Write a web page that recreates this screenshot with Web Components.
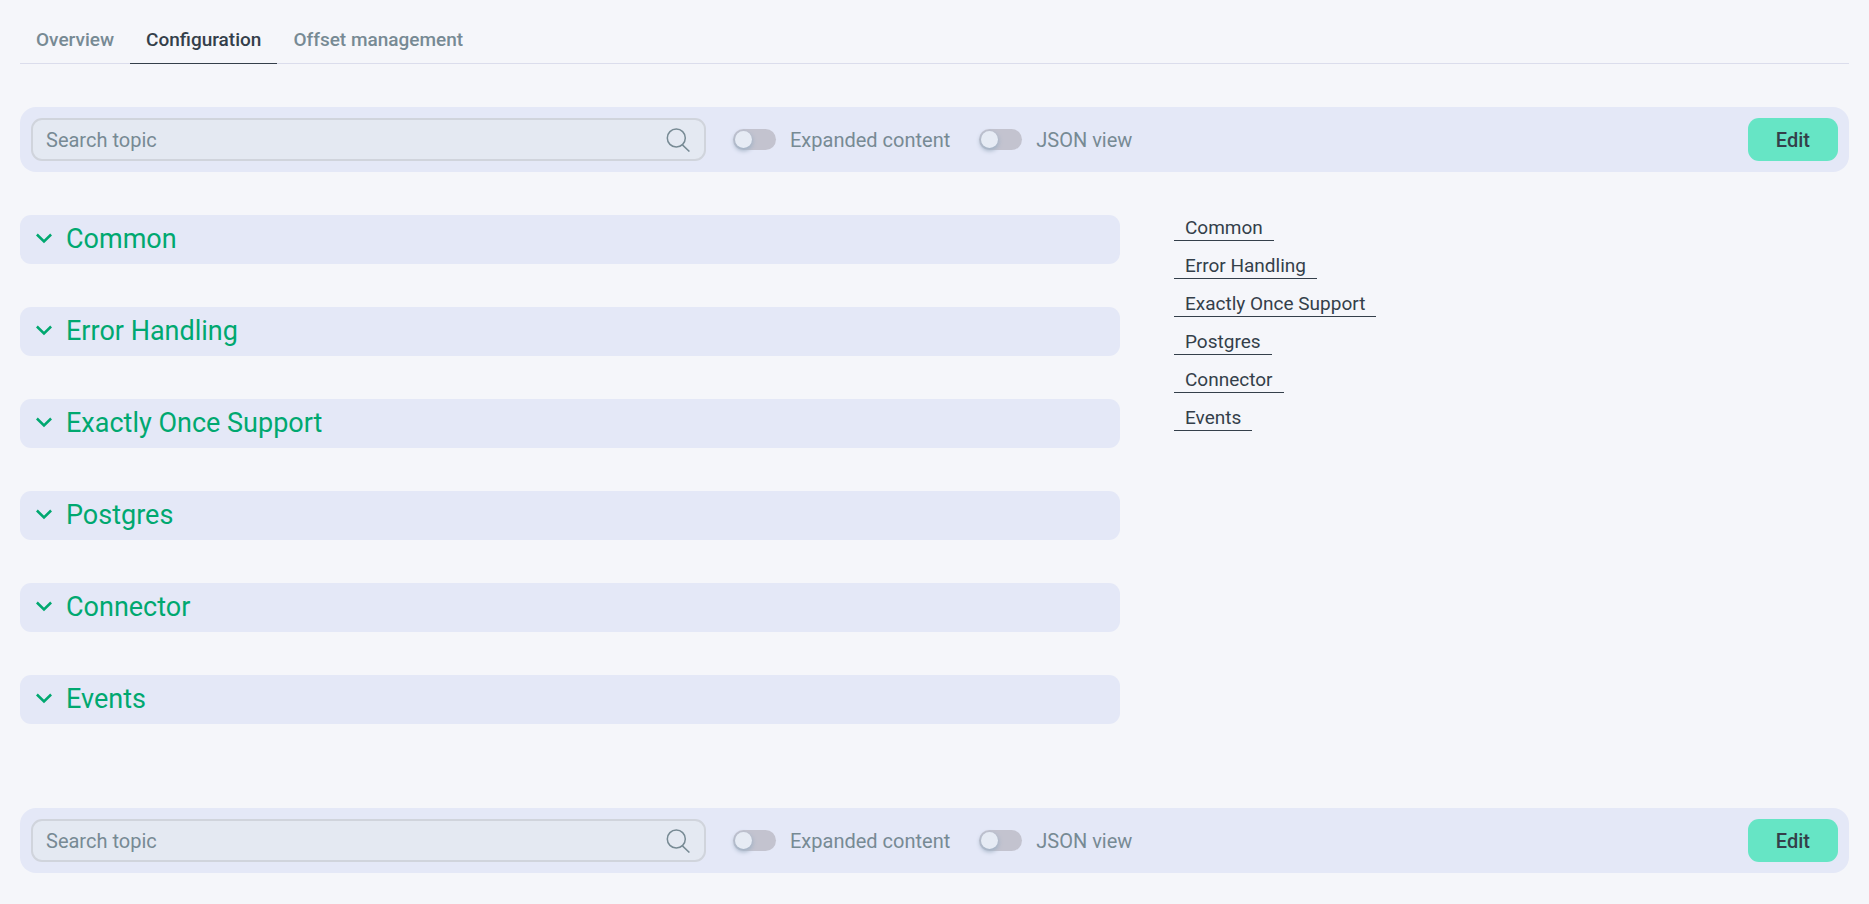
<!DOCTYPE html>
<html lang="en">
<head>
<meta charset="utf-8">
<meta name="viewport" content="width=device-width, initial-scale=1">
<title>Configuration</title>
<style>
  :root {
    --page: #f5f6fa;
    --panel: #e4e8f7;
    --field: #e4e9f2;
    --line: #dbddec;
    --border: #d0d4dc;
    --muted: #778a94;
    --text: #343f4a;
    --title: #00a870;
    --accent: #66e5c5;
    --track: #c3c3cf;
  }
  body {
    margin: 0;
    background: var(--page);
    color: var(--text);
    font-family: Roboto, "Liberation Sans", sans-serif;
  }
</style>
</head>
<body>
<connector-page></connector-page>

<script>
const SECTIONS = ['Common', 'Error Handling', 'Exactly Once Support', 'Postgres', 'Connector', 'Events'];

const slug = (name) => name.toLowerCase().replace(/\s+/g, '-');

class TabBar extends HTMLElement {
  connectedCallback() {
    this.attachShadow({ mode: 'open' });
    this.shadowRoot.innerHTML = `
      <style>
      :host {
        display: block;
      }
      nav {
        display: flex;
        border-bottom: 1px solid var(--line);
      }
      ::slotted(a) {
        padding: 13px 16px 11px;
        margin-bottom: -1px;
        border-bottom: 1px solid transparent;
        color: var(--muted);
        font-size: 19px;
        font-weight: 500;
        line-height: 24px;
        text-decoration: none;
      }
      ::slotted(a[aria-current]) {
        color: var(--text);
        border-color: var(--text);
      }
      </style>
      <nav><slot></slot></nav>
      `;
  }
}
customElements.define('tab-bar', TabBar);

class SearchBox extends HTMLElement {
  connectedCallback() {
    this.attachShadow({ mode: 'open' });
    this.shadowRoot.innerHTML = `
      <style>
      :host {
        display: block;
      }
      label {
        display: flex;
        align-items: center;
        box-sizing: border-box;
        height: 43px;
        padding: 0 14px 0 13px;
        background: var(--field);
        border: 2px solid var(--border);
        border-radius: 11px;
      }
      input {
        flex: 1;
        min-width: 0;
        padding: 0;
        border: 0;
        outline: 0;
        background: none;
        color: var(--text);
        font: inherit;
        font-size: 20px;
        line-height: 24px;
      }
      input::placeholder {
        color: var(--muted);
        opacity: 1;
      }
      svg {
        flex: none;
        width: 24px;
        height: 24px;
      }
      </style>
      <label>
        <input type="text" aria-label="Search topic" placeholder="Search topic">
        <svg viewBox="0 0 24 24" fill="none" stroke="#778a94" stroke-width="1.5" aria-hidden="true">
          <circle cx="10.3" cy="10" r="9"/>
          <path d="M16.4 16.9l7 6.6"/>
        </svg>
      </label>
      `;
  }
}
customElements.define('search-box', SearchBox);

class ToggleSwitch extends HTMLElement {
  connectedCallback() {
    this.attachShadow({ mode: 'open' });
    this.shadowRoot.innerHTML = `
      <style>
      :host {
        display: block;
      }
      label {
        display: flex;
        align-items: center;
        gap: 14px;
        color: var(--muted);
        font-size: 20px;
        line-height: 24px;
        white-space: nowrap;
        cursor: pointer;
      }
      input {
        appearance: none;
        display: flex;
        align-items: center;
        box-sizing: border-box;
        width: 43px;
        height: 21px;
        margin: 0;
        padding: 0 2px;
        border-radius: 11px;
        background: var(--track);
      }
      input::before {
        content: '';
        width: 17px;
        height: 17px;
        border-radius: 50%;
        background: #e6ebf4;
        box-shadow: 0 2px 4px 1px #a3b3c6;
      }
      input:checked {
        justify-content: flex-end;
        background: var(--accent);
      }
      </style>
      <label><input type="checkbox" role="switch"><slot></slot></label>
      `;
  }
}
customElements.define('toggle-switch', ToggleSwitch);

class ConfigToolbar extends HTMLElement {
  connectedCallback() {
    this.attachShadow({ mode: 'open' });
    this.shadowRoot.innerHTML = `
      <style>
      :host {
        display: flex;
        align-items: center;
        gap: 27px;
        padding: 11px;
        background: var(--panel);
        border-radius: 16px;
      }
      search-box {
        flex: 1;
        max-width: 675px;
      }
      .toggles {
        display: flex;
        gap: 29px;
      }
      button {
        height: 43px;
        margin-left: auto;
        padding: 0 28px;
        border: 0;
        border-radius: 11px;
        background: var(--accent);
        color: var(--text);
        font: inherit;
        font-size: 20px;
        font-weight: 500;
        cursor: pointer;
      }
      </style>
      <search-box></search-box>
      <div class="toggles">
        <toggle-switch>Expanded content</toggle-switch>
        <toggle-switch>JSON view</toggle-switch>
      </div>
      <button type="button">Edit</button>
      `;
  }
}
customElements.define('config-toolbar', ConfigToolbar);

class ConfigSection extends HTMLElement {
  connectedCallback() {
    this.attachShadow({ mode: 'open' });
    this.shadowRoot.innerHTML = `
      <style>
      :host {
        display: block;
      }
      h2 {
        margin: 0;
      }
      button {
        display: flex;
        align-items: center;
        gap: 14px;
        width: 100%;
        height: 49px;
        padding: 0 16px 1px;
        border: 0;
        border-radius: 11px;
        background: var(--panel);
        color: var(--title);
        font: inherit;
        font-size: 27px;
        font-weight: 400;
        line-height: 32px;
        text-align: left;
        cursor: pointer;
      }
      svg {
        width: 16px;
        height: 16px;
      }
      </style>
      <h2>
        <button type="button" aria-expanded="false">
          <svg viewBox="0 0 16 16" fill="none" stroke="currentColor" stroke-width="2.5" aria-hidden="true">
            <path d="M.9 3.5L8 10.5l7.1-7"/>
          </svg>
          <slot></slot>
        </button>
      </h2>
      `;
  }
}
customElements.define('config-section', ConfigSection);

class SectionLinks extends HTMLElement {
  connectedCallback() {
    this.attachShadow({ mode: 'open' });
    this.shadowRoot.innerHTML = `
      <style>
      :host {
        display: block;
      }
      nav {
        display: flex;
        flex-direction: column;
        align-items: flex-start;
        gap: 12px;
      }
      a {
        padding: 1px 11px 0;
        border-bottom: 1px solid var(--text);
        color: var(--text);
        font-size: 19px;
        line-height: 24px;
        text-decoration: none;
      }
      </style>
      <nav aria-label="Sections">
        ${SECTIONS.map((name) => `<a href="#${slug(name)}">${name}</a>`).join('')}
      </nav>
      `;
  }
}
customElements.define('section-links', SectionLinks);

class ConnectorPage extends HTMLElement {
  connectedCallback() {
    this.attachShadow({ mode: 'open' });
    this.shadowRoot.innerHTML = `
      <style>
      :host {
        display: block;
        padding: 15px 20px 30px;
      }
      main {
        display: grid;
        grid-template-columns: minmax(0, 44fr) minmax(0, 27fr);
        gap: 54px;
        padding: 43px 0 84px;
      }
      .sections {
        display: flex;
        flex-direction: column;
        gap: 43px;
      }
      .top {
        margin-top: 43px;
      }
      </style>
      <tab-bar>
        <a href="#overview">Overview</a>
        <a href="#configuration" aria-current="page">Configuration</a>
        <a href="#offsets">Offset management</a>
      </tab-bar>
      <config-toolbar class="top"></config-toolbar>
      <main>
        <div class="sections">
          ${SECTIONS.map((name) => `<config-section id="${slug(name)}">${name}</config-section>`).join('')}
        </div>
        <section-links></section-links>
      </main>
      <config-toolbar></config-toolbar>
      `;
  }
}
customElements.define('connector-page', ConnectorPage);
</script>
</body>
</html>
